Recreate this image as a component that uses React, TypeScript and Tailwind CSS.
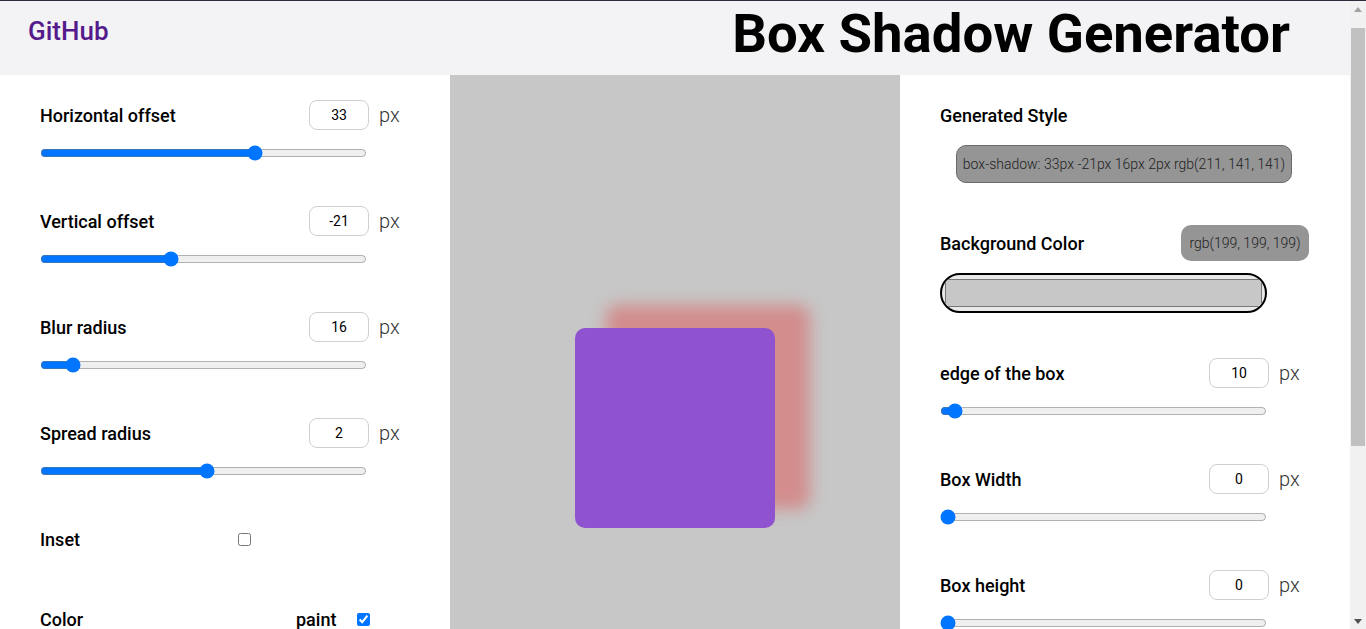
import React from "react";

const font = { fontFamily: "Roboto, 'Noto Sans', Arial, sans-serif" };

function SliderRow({ label, value, min, max }: { label: string; value: number; min: number; max: number }) {
  return (
    <div className="flex flex-col">
      <div className="flex items-center h-[30px]">
        <div className="w-[329px] flex items-center justify-between">
          <span className="text-[18px] font-medium text-black">{label}</span>
          <input
            readOnly
            value={value}
            className="w-[60px] h-[30px] rounded-lg border border-[#cfcfcf] text-center text-[14px] text-black outline-none"
          />
        </div>
        <span className="ml-[10px] text-[20px] font-light text-[#333]">px</span>
      </div>
      <input
        type="range"
        min={min}
        max={max}
        defaultValue={value}
        className="mt-[15px] w-[327px] h-[16px] m-0 accent-[#0075ff]"
      />
    </div>
  );
}

function Scrollbar() {
  return (
    <aside className="sticky top-0 w-[16px] h-[629px] shrink-0 bg-[#f1f1f1] flex flex-col items-center">
      <div className="h-[17px] w-full flex items-center justify-center">
        <svg width="8" height="5" viewBox="0 0 8 5"><path d="M0 5 L4 0 L8 5 Z" fill="#a3a3a3" /></svg>
      </div>
      <div className="mt-[10px] w-[14px] h-[418px] bg-[#c1c1c1]" />
      <div className="flex-1" />
      <div className="h-[17px] w-full flex items-center justify-center">
        <svg width="8" height="5" viewBox="0 0 8 5"><path d="M0 0 L8 0 L4 5 Z" fill="#505050" /></svg>
      </div>
    </aside>
  );
}

export default function App() {
  return (
    <div style={font} className="w-full bg-white border-t border-[#2b2b3b] flex items-start">
      <div className="w-[1350px] min-h-[895px] shrink-0">
        <header className="h-[74px] bg-[#f3f3f6] flex items-start justify-between pl-[28px] pr-[60px]">
          <a className="mt-[13px] text-[26px] leading-[34px] font-medium text-[#551a8b]">GitHub</a>
          <h1 className="mt-[1px] text-[54.5px] leading-[62px] font-bold text-black">Box Shadow Generator</h1>
        </header>
        <main className="grid grid-cols-3">
          <section className="pl-[40px] pt-[25px] flex flex-col gap-[45px]">
            <SliderRow label="Horizontal offset" value={33} min={-100} max={100} />
            <SliderRow label="Vertical offset" value={-21} min={-100} max={100} />
            <SliderRow label="Blur radius" value={16} min={0} max={200} />
            <SliderRow label="Spread radius" value={2} min={-100} max={100} />
            <div className="flex items-center h-[30px]">
              <span className="w-[198px] text-[18px] font-medium">Inset</span>
              <input type="checkbox" className="w-[13px] h-[13px] m-0" />
            </div>
            <div className="flex items-center h-[30px] mt-[5px]">
              <span className="w-[256px] text-[18px] font-medium">Color</span>
              <span className="w-[61px] text-[18px] font-medium">paint</span>
              <input type="checkbox" defaultChecked className="w-[13px] h-[13px] m-0 accent-[#0075ff]" />
            </div>
          </section>
          <section className="bg-[#c7c7c7] h-[706px] flex items-center justify-center">
            <div
              className="w-[200px] h-[200px] rounded-[10px] bg-[#9053cf]"
              style={{ boxShadow: "33px -21px 16px 2px rgb(211, 141, 141)" }}
            />
          </section>
          <section className="pl-[40px] pt-[25px] flex flex-col">
            <div className="h-[30px] flex items-center text-[18px] font-medium">Generated Style</div>
            <div className="mt-[15px] ml-[16px] w-[336px] h-[38px] rounded-[10px] bg-[#959595] border border-[#6a6a6a] flex items-center justify-center text-[14px] font-light text-[#222]">
              box-shadow: 33px -21px 16px 2px rgb(211, 141, 141)
            </div>
            <div className="mt-[42px] w-[369px] h-[36px] flex items-center justify-between">
              <span className="text-[18px] font-medium">Background Color</span>
              <span className="w-[128px] h-[36px] rounded-[10px] bg-[#959595] flex items-center justify-center text-[14px] font-light text-[#222]">
                rgb(199, 199, 199)
              </span>
            </div>
            <div className="mt-[12px] w-[327px] h-[40px] rounded-full border-2 border-black bg-[#e9e9e9] px-[3px] py-[4px] overflow-hidden">
              <div className="w-full h-full bg-[#c7c7c7] border border-[#777]" />
            </div>
            <div className="mt-[45px] flex flex-col gap-[45px]">
              <SliderRow label="edge of the box" value={10} min={0} max={450} />
              <SliderRow label="Box Width" value={0} min={0} max={500} />
              <SliderRow label="Box height" value={0} min={0} max={500} />
            </div>
          </section>
        </main>
      </div>
      <Scrollbar />
    </div>
  );
}
